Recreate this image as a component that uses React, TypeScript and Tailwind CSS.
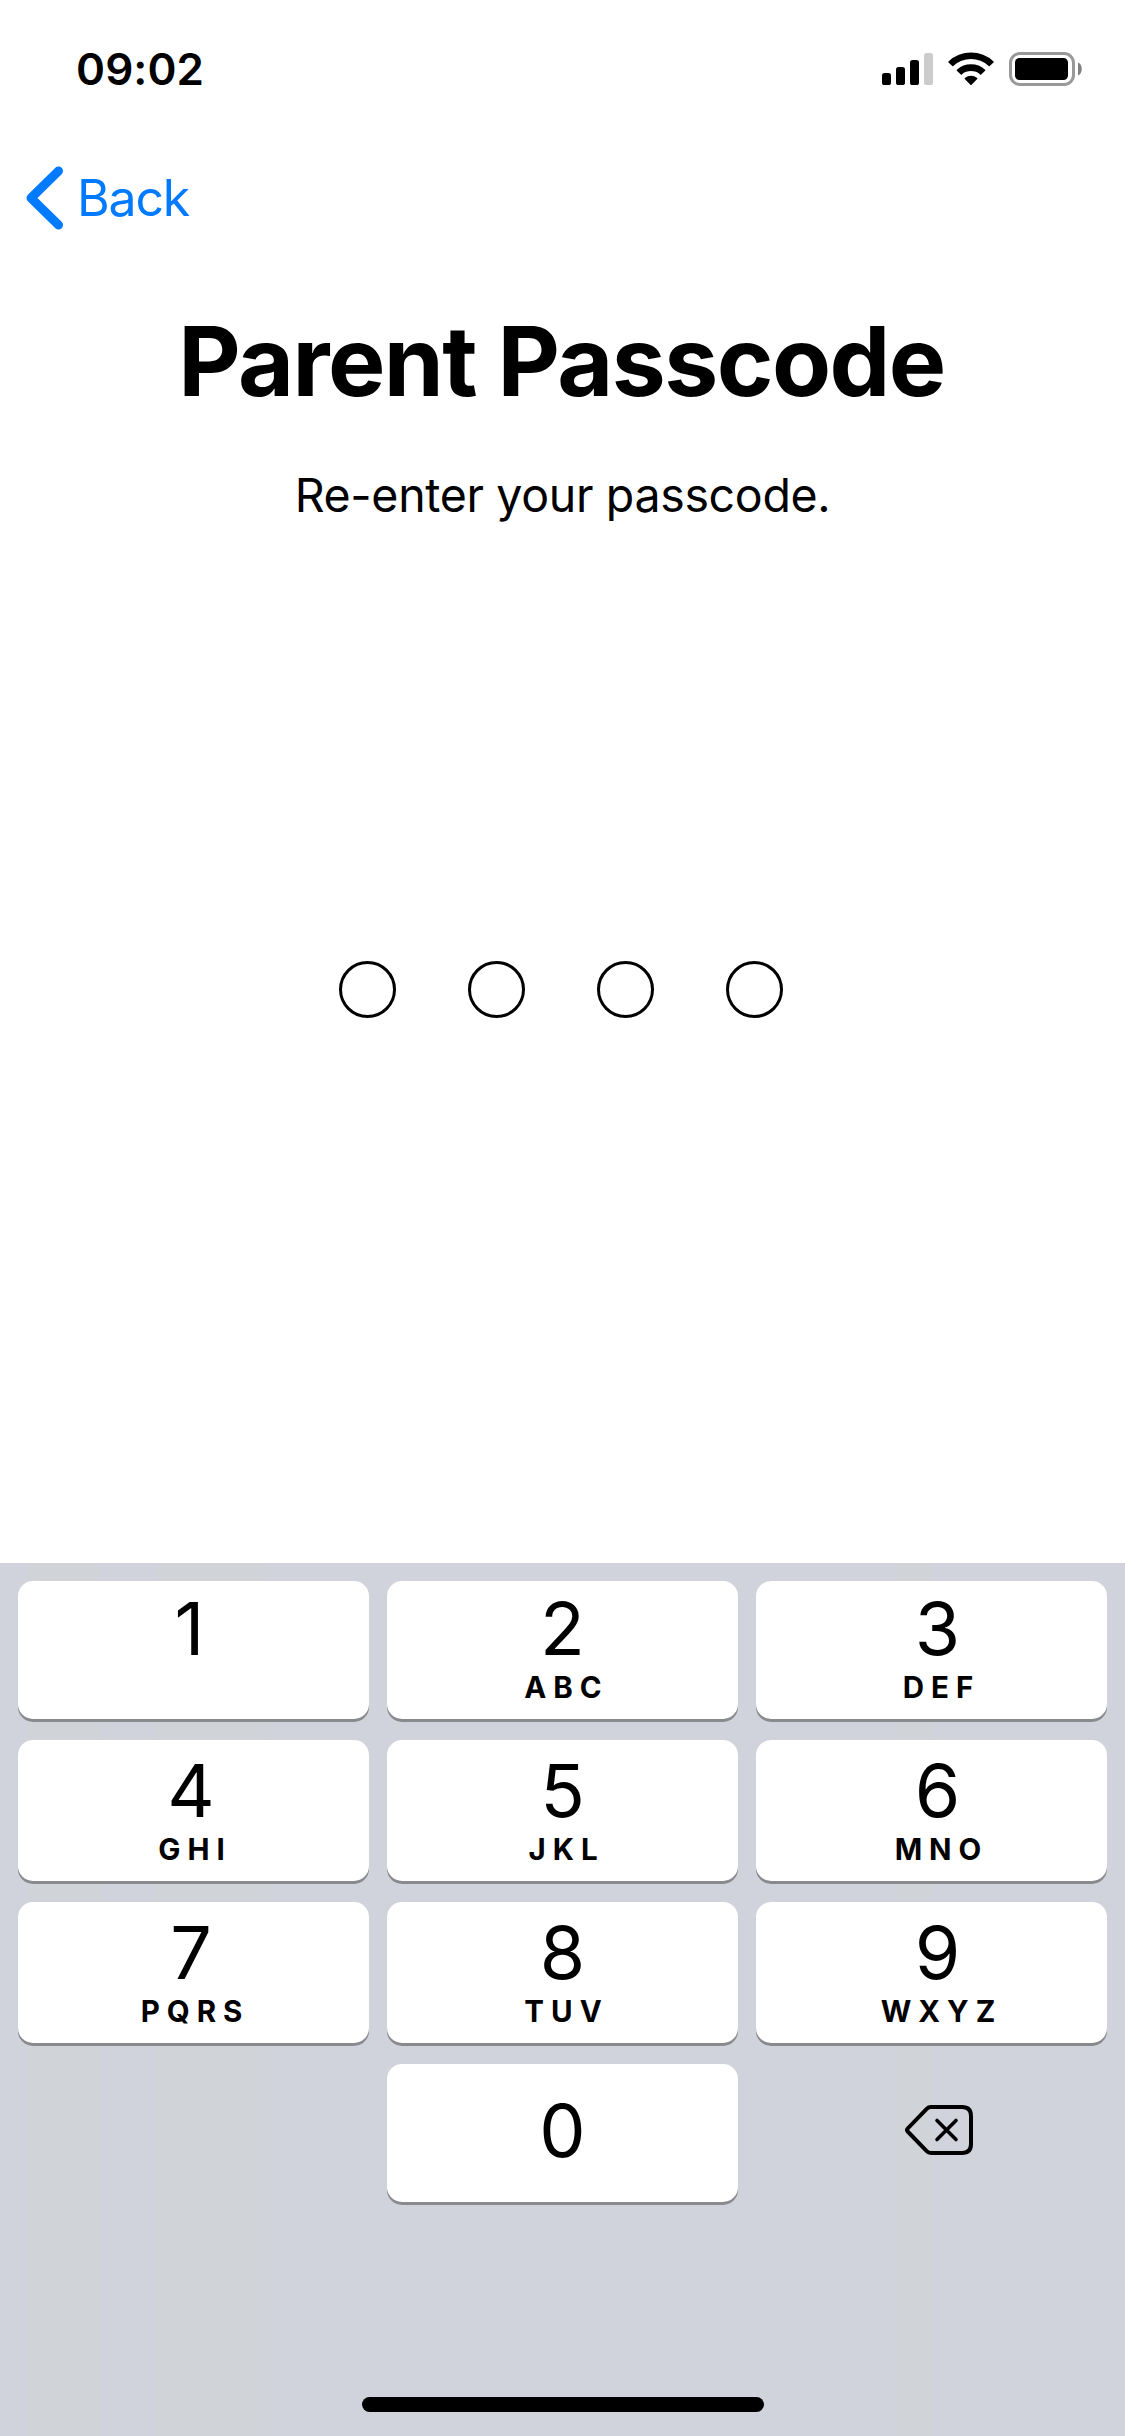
import { useState } from 'react';
import { clsx } from 'clsx';

interface KeyData {
  digit: string;
  letters?: string;
}

const ROWS: KeyData[][] = [
  [{ digit: '1' }, { digit: '2', letters: 'ABC' }, { digit: '3', letters: 'DEF' }],
  [{ digit: '4', letters: 'GHI' }, { digit: '5', letters: 'JKL' }, { digit: '6', letters: 'MNO' }],
  [{ digit: '7', letters: 'PQRS' }, { digit: '8', letters: 'TUV' }, { digit: '9', letters: 'WXYZ' }],
];

const ROW_HEIGHTS = ['h-[138px]', 'h-[141px]', 'h-[141px]'];
// outer columns sit slightly off the centre of their keys
const COLUMN_SHIFT = ['pr-[5px]', '', 'pl-[12px]'];

const PASSCODE_LENGTH = 4;

function StatusBar() {
  return (
    <header className="flex h-[138px] items-center justify-between pl-[76px] pr-[43px]">
      <span className="text-[44px] font-semibold leading-none tracking-[0.1px]">09:02</span>
      <div className="flex items-center">
        <svg width="51" height="34" viewBox="0 0 51 34" className="mr-[15px]">
          <rect x="0" y="21" width="9" height="12" rx="2.6" />
          <rect x="14" y="15" width="9" height="18" rx="2.6" />
          <rect x="28" y="8" width="9" height="25" rx="2.6" />
          <rect x="42" y="1" width="9" height="32" rx="2.6" fill="#cccccc" />
        </svg>
        <svg width="46" height="34" viewBox="0 0 46 34" className="mr-[15px]">
          <path d="M.5 9.400A33 33 0 0 1 45.5 9.400Q46 9.900 45.500 10.400L41.700 14.100Q41.200 14.500 40.700 14A26 26 0 0 0 5.300 14Q4.800 14.500 4.300 14.100L.5 10.400Q0 9.900.5 9.400Z" />
          <path d="M8.900 17.800A21 21 0 0 1 37.100 17.800Q37.500 18.300 37.100 18.700L33.200 22.500Q32.700 22.900 32.200 22.400A14.500 14.500 0 0 0 13.800 22.400Q13.300 22.900 12.800 22.500L8.900 18.700Q8.500 18.300 8.900 17.800Z" />
          <path d="M16.800 26A10 10 0 0 1 29.200 26Q29.700 26.500 29.200 27L23.600 32.700Q23 33.200 22.400 32.700L16.800 27Q16.300 26.500 16.800 26Z" />
        </svg>
        <svg width="73" height="34" viewBox="0 0 73 34">
          <rect x="1.500" y="1.500" width="63" height="31" rx="9.500" fill="none" stroke="#999999" strokeWidth="3" />
          <rect x="6" y="6" width="53" height="22" rx="4.500" />
          <path d="M69 10.500C74 12.500 74 21.500 69 23.500Z" fill="#808080" />
        </svg>
      </div>
    </header>
  );
}

function BackspaceIcon() {
  return (
    <svg width="68" height="50" viewBox="0 0 68 50" fill="none" stroke="#000" strokeWidth="4" strokeLinecap="round" strokeLinejoin="round">
      <path d="M26 2H57Q66 2 66 11V39Q66 48 57 48H26Q23.500 48 21.700 46.200L2.700 26.500Q1.300 25 2.700 23.500L21.700 3.800Q23.500 2 26 2Z" />
      <path d="M32 15.500L51 34.500M51 15.500L32 34.500" strokeWidth="3.600" />
    </svg>
  );
}

interface KeyProps extends KeyData {
  className?: string;
  onPress: (digit: string) => void;
}

function Key({ digit, letters, className, onPress }: KeyProps) {
  return (
    <button
      onClick={() => onPress(digit)}
      className={clsx(
        'flex flex-col items-center rounded-[15px] bg-white shadow-[0_3px_0_#898a8d]',
        digit === '0' ? 'justify-center pb-[5px]' : 'justify-end pb-[16px]',
        className
      )}
    >
      <span className={clsx('text-[73.5px] font-normal leading-[75px]', digit === '1' && 'pr-[3px]')}>{digit}</span>
      {digit !== '0' && (
        <span className="mt-[6px] h-[31px] pl-[8px] text-[29.5px] font-bold leading-[31px] tracking-[7px]">{letters}</span>
      )}
    </button>
  );
}

export default function App() {
  const [code, setCode] = useState('');

  const handlePress = (digit: string) => {
    setCode(prev => (prev.length < PASSCODE_LENGTH ? prev + digit : prev));
  };

  return (
    <div className="flex h-[2436px] w-[1125px] flex-col bg-white font-['Inter',sans-serif] text-black">
      <StatusBar />

      <nav className="flex h-[120px] items-center pl-[26px]">
        <button className="flex items-center text-[#007aff]">
          <svg width="37" height="64" viewBox="0 0 37 64" fill="none" stroke="currentColor" strokeWidth="9" strokeLinecap="round" strokeLinejoin="round">
            <path d="M32.500 5L5 32L32.500 59" />
          </svg>
          <span className="ml-[14px] text-[50px] leading-none tracking-[-1.2px]">Back</span>
        </button>
      </nav>

      <main className="flex flex-1 flex-col items-center pt-[42px]">
        <h1 className="pr-[2px] text-[96.5px] font-bold leading-[122px] tracking-[-1.55px]">Parent Passcode</h1>
        <p className="mt-[43px] text-[46.5px] leading-[61px] tracking-[-0.34px]">Re-enter your passcode.</p>
        <div className="mt-[435px] flex gap-[72px] pr-[3px]">
          {Array.from({ length: PASSCODE_LENGTH }, (_, i) => (
            <span
              key={i}
              className={clsx('size-[57px] rounded-full border-[3px] border-black', i < code.length && 'bg-black')}
            />
          ))}
        </div>
      </main>

      <section className="flex h-[873px] flex-col bg-[#d0d3db] bg-[linear-gradient(90deg,transparent_27px,#d0d3d7_27px,#d0d3d7_95px,transparent_103px,transparent_154px,#d0d3d7_156px,#d0d3d7_255px,transparent_272px,transparent_895px,#d0d3d7_896px,#d0d3d7_930px,transparent_932px)] px-[18px] pt-[18px]">
        <div className="flex flex-col gap-[21px]">
          {ROWS.map((row, r) => (
            <div key={r} className="grid grid-cols-3 gap-[18px]">
              {row.map((item, c) => (
                <Key key={item.digit} {...item} onPress={handlePress} className={clsx(ROW_HEIGHTS[r], COLUMN_SHIFT[c])} />
              ))}
            </div>
          ))}
          <div className="grid grid-cols-3 gap-[18px]">
            <span />
            <Key digit="0" onPress={handlePress} className="h-[138px]" />
            <button
              onClick={() => setCode(prev => prev.slice(0, -1))}
              aria-label="Delete"
              className="flex items-center justify-center pb-[6px] pl-[15px]"
            >
              <BackspaceIcon />
            </button>
          </div>
        </div>
        <div className="mb-[24px] mt-auto h-[15px] w-[402px] self-center rounded-full bg-black" />
      </section>
    </div>
  );
}
